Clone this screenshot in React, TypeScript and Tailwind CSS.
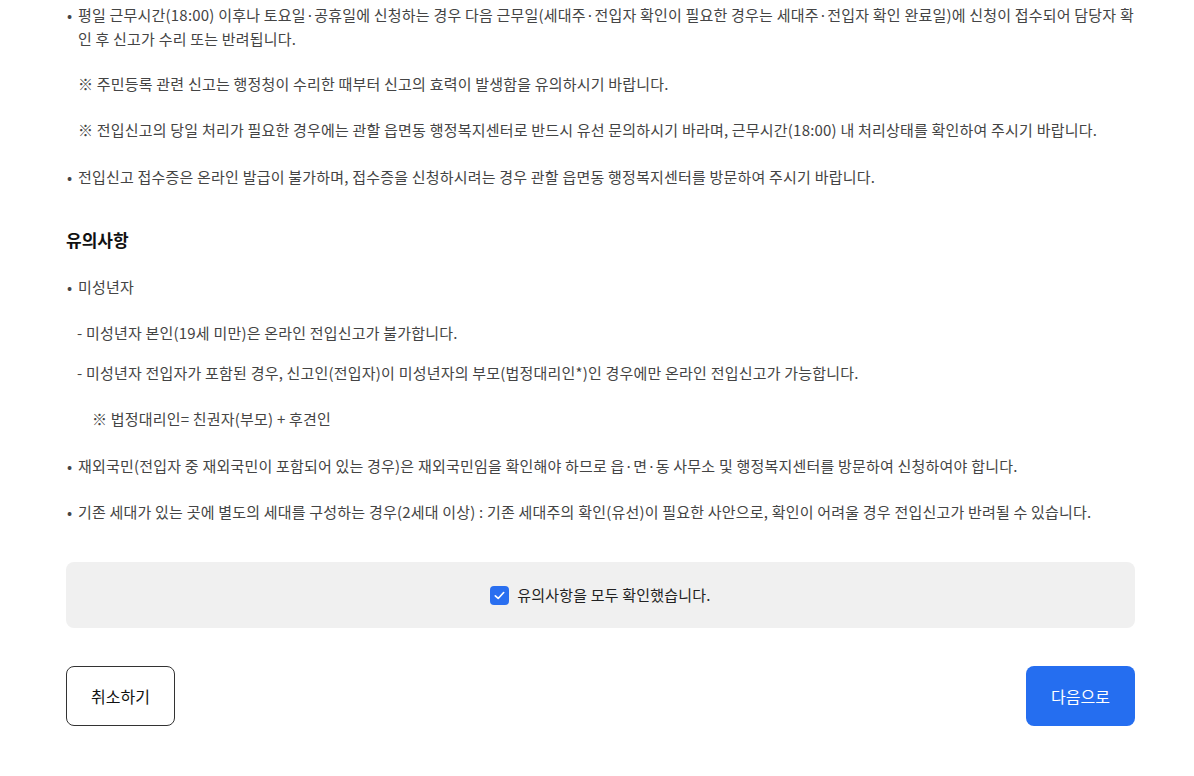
import React from "react";

const font = { fontFamily: '"Noto Sans CJK KR", "Noto Sans", sans-serif' };

function Bullet({ children, className = "" }: { children: React.ReactNode; className?: string }) {
  return (
    <div className={"flex " + className}>
      <span className="w-[12px] shrink-0 pl-[1px]">•</span>
      <div className="flex-1">{children}</div>
    </div>
  );
}

export default function App() {
  return (
    <div className="bg-white w-[1194px] h-[776px] overflow-hidden" style={font}>
      <div className="pl-[66px] pr-[59px] pt-[3px] text-[15px] leading-[24px] text-[#444] tracking-[0.2px]">
        <Bullet>
          평일 근무시간(18:00) 이후나 토요일·공휴일에 신청하는 경우 다음 근무일(세대주·전입자 확인이 필요한 경우는 세대주·전입자 확인 완료일)에 신청이 접수되어 담당자 확인 후 신고가 수리 또는 반려됩니다.
        </Bullet>
        <div className="pl-[12px] mt-[21px]">※ 주민등록 관련 신고는 행정청이 수리한 때부터 신고의 효력이 발생함을 유의하시기 바랍니다.</div>
        <div className="pl-[12px] mt-[22px]">※ 전입신고의 당일 처리가 필요한 경우에는 관할 읍면동 행정복지센터로 반드시 유선 문의하시기 바라며, 근무시간(18:00) 내 처리상태를 확인하여 주시기 바랍니다.</div>
        <Bullet className="mt-[23px]">전입신고 접수증은 온라인 발급이 불가하며, 접수증을 신청하시려는 경우 관할 읍면동 행정복지센터를 방문하여 주시기 바랍니다.</Bullet>

        <h3 className="mt-[39px] text-[17px] font-bold text-[#111] tracking-normal">유의사항</h3>

        <Bullet className="mt-[23px]">미성년자</Bullet>
        <div className="pl-[11px] mt-[22px]">- 미성년자 본인(19세 미만)은 온라인 전입신고가 불가합니다.</div>
        <div className="pl-[11px] mt-[16px]">- 미성년자 전입자가 포함된 경우, 신고인(전입자)이 미성년자의 부모(법정대리인*)인 경우에만 온라인 전입신고가 가능합니다.</div>
        <div className="pl-[26px] mt-[22px]">※ 법정대리인= 친권자(부모) + 후견인</div>
        <Bullet className="mt-[23px]">재외국민(전입자 중 재외국민이 포함되어 있는 경우)은 재외국민임을 확인해야 하므로 읍·면·동 사무소 및 행정복지센터를 방문하여 신청하여야 합니다.</Bullet>
        <Bullet className="mt-[22px]">기존 세대가 있는 곳에 별도의 세대를 구성하는 경우(2세대 이상) : 기존 세대주의 확인(유선)이 필요한 사안으로, 확인이 어려울 경우 전입신고가 반려될 수 있습니다.</Bullet>

        <div className="mt-[38px] h-[66px] rounded-[8px] bg-[#f0f0f0] flex items-center justify-center gap-[8px]">
          <span className="w-[19px] h-[19px] rounded-[4px] bg-[#2a6ff0] flex items-center justify-center">
            <svg width="13" height="13" viewBox="0 0 14 14" fill="none">
              <path d="M2.5 7.3 L5.6 10.2 L11.5 3.8" stroke="white" strokeWidth="1.8" strokeLinecap="round" strokeLinejoin="round" />
            </svg>
          </span>
          <span className="text-[#222]">유의사항을 모두 확인했습니다.</span>
        </div>

        <div className="mt-[38px] flex justify-between tracking-normal">
          <button className="w-[109px] h-[60px] rounded-[8px] border border-[#333] bg-white text-[16px] text-[#111]">취소하기</button>
          <button className="w-[109px] h-[60px] rounded-[8px] bg-[#256ef0] text-[16px] text-white">다음으로</button>
        </div>
      </div>
    </div>
  );
}
